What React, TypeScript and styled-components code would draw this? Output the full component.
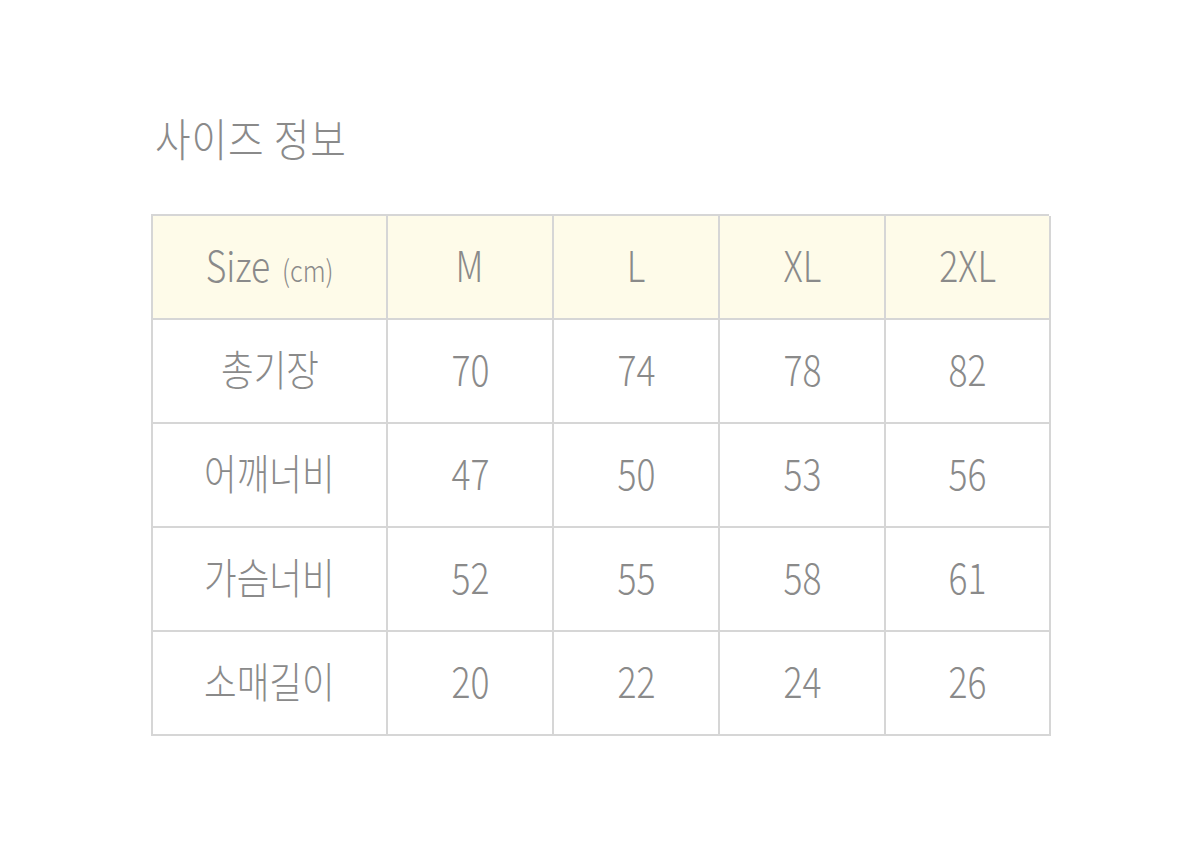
import styled, { createGlobalStyle } from 'styled-components';

const GlobalStyle = createGlobalStyle`
  html, body {
    margin: 0;
    padding: 0;
    background: #ffffff;
  }
  body {
    font-family: "Noto Sans CJK KR", "Noto Sans", sans-serif;
  }
`;

const sizes = ['M', 'L', 'XL', '2XL'];

const rows: { label: string; values: number[] }[] = [
  { label: '총기장', values: [70, 74, 78, 82] },
  { label: '어깨너비', values: [47, 50, 53, 56] },
  { label: '가슴너비', values: [52, 55, 58, 61] },
  { label: '소매길이', values: [20, 22, 24, 26] },
];

const Page = styled.div`
  width: 1200px;
  height: 857px;
  padding: 112px 0 0 151px;
  box-sizing: border-box;
`;

const Title = styled.h2`
  margin: 0 0 50px 4px;
  height: 52px;
  font-weight: 200;
  font-size: 45px;
  line-height: 52px;
  color: #8a8a8a;
  letter-spacing: 1px;
  transform: scaleX(0.86);
  transform-origin: left center;
  white-space: nowrap;
`;

const Table = styled.div`
  display: grid;
  grid-template-columns: 235px 166px 166px 166px 165px;
  grid-auto-rows: 104px;
  width: 898px;
  border-top: 2px solid #d6d6d6;
  border-left: 2px solid #d6d6d6;
  box-sizing: border-box;
`;

const Cell = styled.div<{ $head?: boolean }>`
  display: flex;
  align-items: center;
  justify-content: center;
  padding-bottom: 6px;
  box-sizing: border-box;
  border-right: 2px solid #d6d6d6;
  border-bottom: 2px solid #d6d6d6;
  background: ${(p) => (p.$head ? '#fefbe9' : '#ffffff')};
  overflow: hidden;
`;

const Label = styled.span`
  display: inline-block;
  font-weight: 200;
  font-size: 42px;
  line-height: 1;
  color: #8a8a8a;
  white-space: nowrap;
  transform: scaleX(0.845);
`;

const Unit = styled.span`
  font-size: 30px;
  margin-left: 14px;
`;

export default function App() {
  return (
    <Page>
      <GlobalStyle />
      <Title>사이즈 정보</Title>
      <Table>
        <Cell $head>
          <Label>
            Size<Unit>(cm)</Unit>
          </Label>
        </Cell>
        {sizes.map((s) => (
          <Cell $head key={s}>
            <Label>{s}</Label>
          </Cell>
        ))}
        {rows.map((r) => [
          <Cell key={r.label}>
            <Label>{r.label}</Label>
          </Cell>,
          ...r.values.map((v, i) => (
            <Cell key={r.label + i}>
              <Label>{v}</Label>
            </Cell>
          )),
        ])}
      </Table>
    </Page>
  );
}
